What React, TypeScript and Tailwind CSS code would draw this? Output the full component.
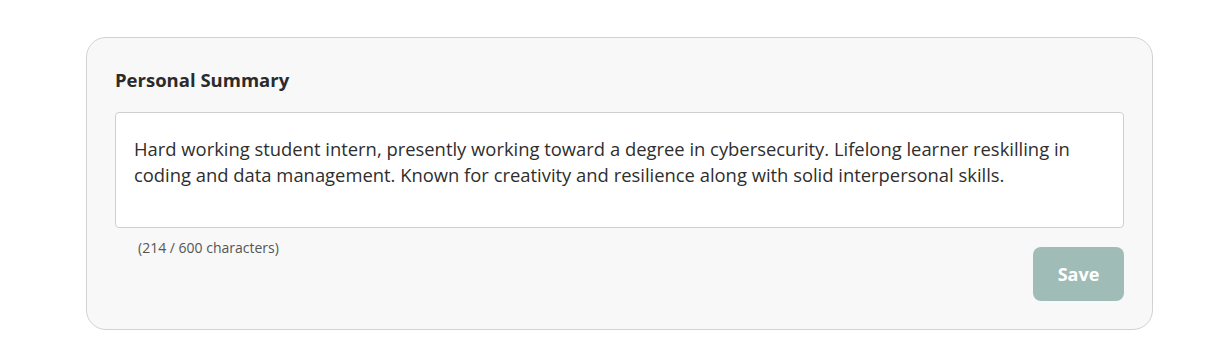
import { useState } from 'react';

export default function App() {
  const [summary, setSummary] = useState(
    'Hard working student intern, presently working toward a degree in cybersecurity. Lifelong learner reskilling in coding and data management. Known for creativity and resilience along with solid interpersonal skills.'
  );

  return (
    <div className="min-h-screen bg-white pt-[37px] pl-[86px]" style={{ fontFamily: '"Open Sans", sans-serif' }}>
      {/* Card */}
      <div className="w-[1067px] rounded-[20px] border border-[#d2d2d2] bg-[#f8f8f8] px-[28px] pt-[30px] pb-[28px]">
        <h2 className="text-[18.5px] leading-[24px] font-bold text-[#2b2b2b]">Personal Summary</h2>

        <textarea
          value={summary}
          onChange={(e) => setSummary(e.target.value)}
          maxLength={600}
          className="mt-[20px] block h-[116px] w-full resize-none rounded-[4px] border border-[#cfcfcf] bg-white px-[18px] py-[23px] text-[18.4px] leading-[26px] text-[#2e2e2e] focus:outline-none"
        />

        {/* Footer */}
        <div className="mt-[11px] flex items-start justify-between">
          <p className="pl-[23px] text-[14px] leading-[18px] text-[#555]">
            ({summary.length} / 600 characters)
          </p>
          <button className="mt-[8px] h-[54px] w-[91px] rounded-[8px] bg-[#a0bcb6] text-[18px] font-bold text-white">
            Save
          </button>
        </div>
      </div>
    </div>
  );
}
